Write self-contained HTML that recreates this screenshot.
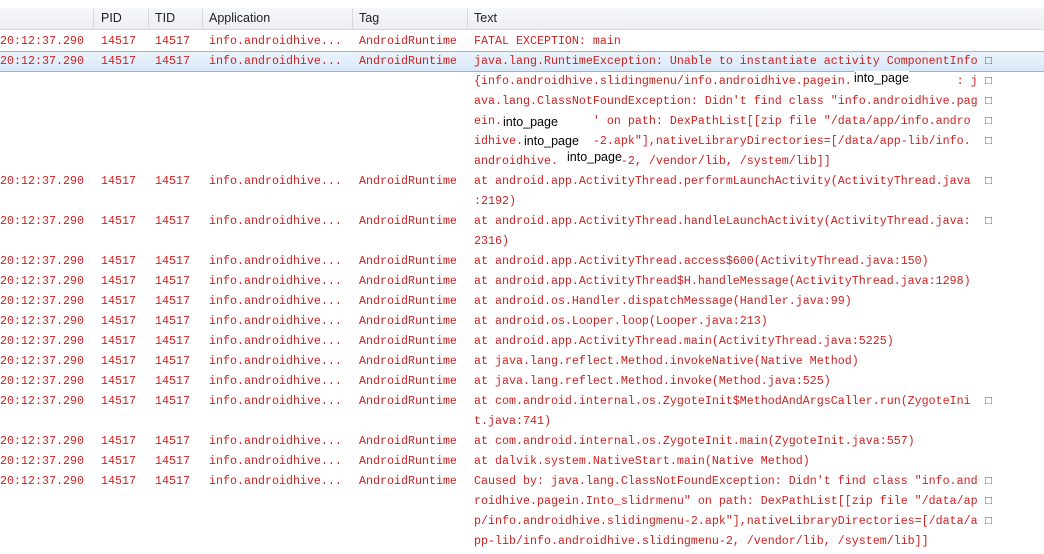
<!DOCTYPE html>
<html><head><style>
body{margin:0;width:1044px;height:554px;overflow:hidden;background:#fff;position:relative;font-family:"Liberation Mono",monospace;}
.hdr{position:absolute;left:0;top:8px;width:1044px;height:21px;background:linear-gradient(#f7f8fa,#eceef1);border-bottom:1px solid #d5d8dc;}
.hdr span{position:absolute;top:3px;font:12.5px "Liberation Sans",sans-serif;color:#222;}
.sep{position:absolute;top:8px;width:1px;height:21px;background:#d8dadd;}
.sel{position:absolute;left:0;top:51px;width:1044px;height:19px;background:linear-gradient(#eaf3fc,#d9e9f8);border-top:1px solid #8fb5d8;border-bottom:1px solid #8fb5d8;}
.l{position:absolute;font-size:11.67px;color:#cc2222;white-space:pre;line-height:14px;}
.w{position:absolute;background:#fff;font:12.5px "Liberation Sans",sans-serif;color:#000;line-height:14px;height:15px;}
</style></head><body>
<div class="hdr"><span style="left:101px">PID</span><span style="left:155px">TID</span><span style="left:209px">Application</span><span style="left:359px">Tag</span><span style="left:474px">Text</span></div>
<div class="sep" style="left:93px"></div><div class="sep" style="left:148px"></div><div class="sep" style="left:202px"></div><div class="sep" style="left:352px"></div><div class="sep" style="left:467px"></div>
<div class="sel"></div>
<div id="c"></div>
<script>
var rows=[[41,"FATAL EXCEPTION: main"],[61,"java.lang.RuntimeException: Unable to instantiate activity ComponentInfo",1],
[181,"at android.app.ActivityThread.performLaunchActivity(ActivityThread.java",1],
[221,"at android.app.ActivityThread.handleLaunchActivity(ActivityThread.java:",1],
[261,"at android.app.ActivityThread.access$600(ActivityThread.java:150)"],
[281,"at android.app.ActivityThread$H.handleMessage(ActivityThread.java:1298)"],
[301,"at android.os.Handler.dispatchMessage(Handler.java:99)"],
[321,"at android.os.Looper.loop(Looper.java:213)"],
[341,"at android.app.ActivityThread.main(ActivityThread.java:5225)"],
[361,"at java.lang.reflect.Method.invokeNative(Native Method)"],
[381,"at java.lang.reflect.Method.invoke(Method.java:525)"],
[401,"at com.android.internal.os.ZygoteInit$MethodAndArgsCaller.run(ZygoteIni",1],
[441,"at com.android.internal.os.ZygoteInit.main(ZygoteInit.java:557)"],
[461,"at dalvik.system.NativeStart.main(Native Method)"],
[481,"Caused by: java.lang.ClassNotFoundException: Didn't find class \"info.and",1]];
var cont=[[81,"{info.androidhive.slidingmenu/info.androidhive.pagein.               : j",1],
[101,"ava.lang.ClassNotFoundException: Didn't find class \"info.androidhive.pag",1],
[121,"ein.             ' on path: DexPathList[[zip file \"/data/app/info.andro",1],
[141,"idhive.          -2.apk\"],nativeLibraryDirectories=[/data/app-lib/info.",1],
[161,"androidhive.         -2, /vendor/lib, /system/lib]]"],
[201,":2192)"],[241,"2316)"],[421,"t.java:741)"],
[501,"roidhive.pagein.Into_slidrmenu\" on path: DexPathList[[zip file \"/data/ap",1],
[521,"p/info.androidhive.slidingmenu-2.apk\"],nativeLibraryDirectories=[/data/a",1],
[541,"pp-lib/info.androidhive.slidingmenu-2, /vendor/lib, /system/lib]]"]];
var h="";
function L(x,y,t){return '<div class="l" style="left:'+x+'px;top:'+(y-7)+'px">'+t.replace(/&/g,"&amp;").replace(/</g,"&lt;")+'</div>';}
rows.forEach(function(r){var y=r[0];h+=L(0,y,"20:12:37.290")+L(101,y,"14517")+L(155,y,"14517")+L(209,y,"info.androidhive...")+L(359,y,"AndroidRuntime")+L(474,y,r[1]);if(r[2])h+=L(985,y,"□");});
cont.forEach(function(r){h+=L(474,r[0],r[1]);if(r[2])h+=L(985,r[0],"□");});
h+='<div class="w" style="left:854px;top:71px">into_page</div>';
h+='<div class="w" style="left:503px;top:115px">into_page</div>';
h+='<div class="w" style="left:524px;top:134px">into_page</div>';
h+='<div class="w" style="left:567px;top:150px">into_page</div>';
document.getElementById("c").innerHTML=h;
</script>
</body></html>
